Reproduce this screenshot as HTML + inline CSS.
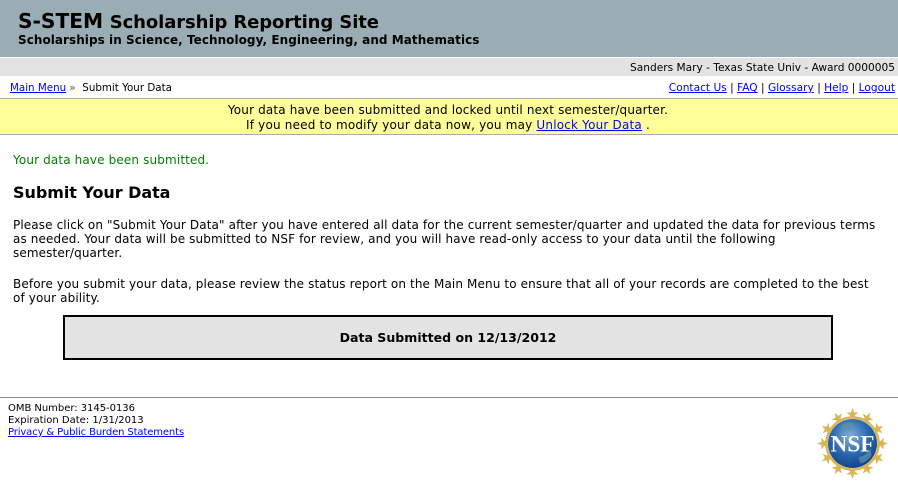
<!DOCTYPE html>
<html><head><meta charset="utf-8"><style>
html,body{margin:0;padding:0;background:#fff}
body{width:898px;height:485px;position:relative;overflow:hidden;font-family:"DejaVu Sans","Liberation Sans",sans-serif;color:#000}
.b{position:absolute}
.t{position:absolute;white-space:nowrap}
a{color:#00f;text-decoration:underline}
.p{font-size:12px;line-height:14px;left:13px;letter-spacing:.118px}
.s{font-size:10.67px;line-height:12px}
.f{font-size:10px;line-height:12px}
</style></head><body>
<div class="b" style="left:0;top:0;width:898px;height:57px;background:#9aadb4"></div>
<div class="b" style="left:0;top:58px;width:898px;height:18px;background:#e3e3e3"></div>
<div class="t" style="left:18px;top:9px;font-size:19px;line-height:24px;font-weight:bold"><span style="font-size:20.2px">S-STEM</span> <span style="font-size:18px;letter-spacing:-.1px">Scholarship Reporting Site</span></div>
<div class="t" style="left:18px;top:33px;font-size:12px;line-height:15px;font-weight:bold;letter-spacing:.05px">Scholarships in Science, Technology, Engineering, and Mathematics</div>
<div class="t s" style="right:3px;top:61.5px;font-size:10.6px">Sanders Mary - Texas State Univ - Award 0000005</div>
<div class="t" style="left:10px;top:82px;font-size:10.3px;line-height:12px"><a href="#">Main Menu</a> <span style="color:#555">»</span>&nbsp; Submit Your Data</div>
<div class="t s" style="right:3px;top:82px;font-size:10.62px"><a href="#">Contact Us</a> | <a href="#">FAQ</a> | <a href="#">Glossary</a> | <a href="#">Help</a> | <a href="#">Logout</a></div>
<div class="b" style="left:0;top:98px;width:898px;height:35px;background:#ffff99;border-top:1px solid #aaa;border-bottom:1px solid #aaa"></div>
<div class="t" style="left:-1px;width:898px;top:103px;text-align:center;font-size:12px;line-height:15px;letter-spacing:.16px">Your data have been submitted and locked until next semester/quarter.<br><span style="letter-spacing:.19px">If you need to modify your data now, you may <a href="#">Unlock Your Data</a> .</span></div>
<div class="t p" style="top:153px;color:#008000;letter-spacing:.14px">Your data have been submitted.</div>
<div class="t" style="left:13px;top:183px;font-size:16px;line-height:20px;font-weight:bold;letter-spacing:-.05px">Submit Your Data</div>
<div class="t p" style="top:218px">Please click on "Submit Your Data" after you have entered all data for the current semester/quarter and updated the data for previous terms</div>
<div class="t p" style="top:232px">as needed. Your data will be submitted to NSF for review, and you will have read-only access to your data until the following</div>
<div class="t p" style="top:246px">semester/quarter.</div>
<div class="t p" style="top:277px">Before you submit your data, please review the status report on the Main Menu to ensure that all of your records are completed to the best</div>
<div class="t p" style="top:291px">of your ability.</div>
<div class="b" style="left:63px;top:315px;width:766px;height:41px;background:#e3e3e3;border:2px solid #000"></div>
<div class="t" style="left:63px;width:770px;top:330px;text-align:center;font-size:12.55px;line-height:15px;font-weight:bold">Data Submitted on 12/13/2012</div>
<div class="b" style="left:0;top:397px;width:898px;height:1px;background:#888"></div>
<div class="t f" style="left:8px;top:403px;letter-spacing:-.03px">OMB Number: 3145-0136</div>
<div class="t f" style="left:8px;top:415px">Expiration Date: 1/31/2013</div>
<div class="t f" style="left:8px;top:427px;letter-spacing:-.12px"><a href="#">Privacy &amp; Public Burden Statements</a></div>
<svg class="b" style="left:815px;top:406px" width="76" height="76" viewBox="0 0 76 76">
<defs>
<radialGradient id="g" cx="45%" cy="35%" r="70%"><stop offset="0" stop-color="#7fb2dc"/><stop offset=".55" stop-color="#2a66ae"/><stop offset="1" stop-color="#123f80"/></radialGradient>
<polygon id="s" fill="#dab554" points="0,-1 .225,-.31 .95,-.31 .36,.12 .59,.81 0,.38 -.59,.81 -.36,.12 -.95,-.31 -.225,-.31"/>
</defs>
<g transform="translate(37.5 37.5)">
<circle r="26" fill="none" stroke="#dab554" stroke-width="2.5"/>
<use href="#s" transform="rotate(0) translate(0 -29) scale(6.5)"/>
<use href="#s" transform="rotate(30) translate(0 -29) scale(6.5)"/>
<use href="#s" transform="rotate(60) translate(0 -29) scale(6.5)"/>
<use href="#s" transform="rotate(90) translate(0 -29) scale(6.5)"/>
<use href="#s" transform="rotate(120) translate(0 -29) scale(6.5)"/>
<use href="#s" transform="rotate(150) translate(0 -29) scale(6.5)"/>
<use href="#s" transform="rotate(180) translate(0 -29) scale(6.5)"/>
<use href="#s" transform="rotate(210) translate(0 -29) scale(6.5)"/>
<use href="#s" transform="rotate(240) translate(0 -29) scale(6.5)"/>
<use href="#s" transform="rotate(270) translate(0 -29) scale(6.5)"/>
<use href="#s" transform="rotate(300) translate(0 -29) scale(6.5)"/>
<use href="#s" transform="rotate(330) translate(0 -29) scale(6.5)"/>
<circle r="24.5" fill="url(#g)"/>
<path d="M-12 -18q8-5 14-2l-2 6-9 3zM6 14q8-2 12-9l1 7q-5 7-11 8z" fill="#5f93a8" opacity=".7"/>
<text x="0" y="8" text-anchor="middle" font-family="Liberation Serif,serif" font-weight="bold" font-size="23" fill="#fff" textLength="44" lengthAdjust="spacingAndGlyphs">NSF</text>
</g>
</svg>
</body></html>
